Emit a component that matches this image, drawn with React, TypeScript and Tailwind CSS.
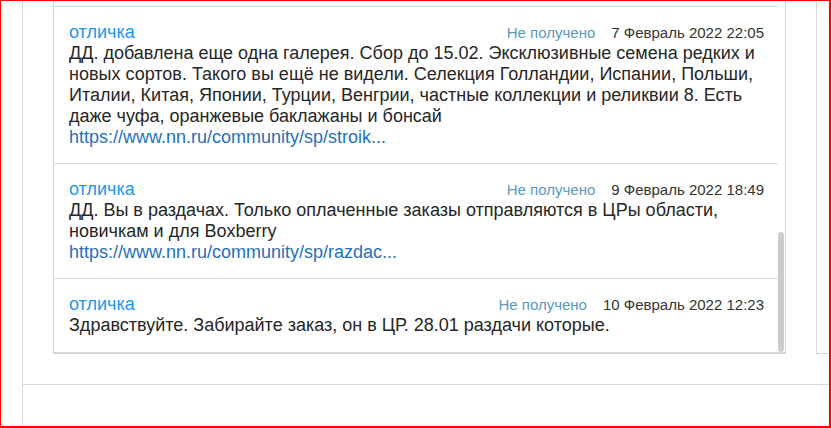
import React from "react";

type Msg = {
  name: string;
  date: string;
  text: string[];
  link?: string;
};

const messages: Msg[] = [
  {
    name: "отличка",
    date: "7 Февраль 2022 22:05",
    text: [
      "ДД. добавлена еще одна галерея. Сбор до 15.02. Эксклюзивные семена редких и",
      "новых сортов. Такого вы ещё не видели. Селекция Голландии, Испании, Польши,",
      "Италии, Китая, Японии, Турции, Венгрии, частные коллекции и реликвии 8. Есть",
      "даже чуфа, оранжевые баклажаны и бонсай",
    ],
    link: "https://www.nn.ru/community/sp/stroik...",
  },
  {
    name: "отличка",
    date: "9 Февраль 2022 18:49",
    text: [
      "ДД. Вы в раздачах. Только оплаченные заказы отправляются в ЦРы области,",
      "новичкам и для Boxberry",
    ],
    link: "https://www.nn.ru/community/sp/razdac...",
  },
  {
    name: "отличка",
    date: "10 Февраль 2022 12:23",
    text: ["Здравствуйте. Забирайте заказ, он в ЦР. 28.01 раздачи которые."],
  },
];

function Message({ m }: { m: Msg }) {
  return (
    <div className="border-t border-[#dadada] pt-[15px] pb-[15px] pl-[15px] pr-[14px]">
      <div className="flex items-baseline justify-between h-[21px]">
        <span className="text-[18px] leading-[21px] text-[#2196f3]">{m.name}</span>
        <div className="flex items-baseline">
          <span className="text-[15px] leading-[21px] text-[#5a98c2]">Не получено</span>
          <span className="ml-4 text-[15px] leading-[21px] text-[#333333]">{m.date}</span>
        </div>
      </div>
      <div className="text-[18px] leading-[21px] text-[#262626]">
        {m.text.map((t, i) => (
          <div key={i} className="whitespace-nowrap">
            {t}
          </div>
        ))}
        {m.link && (
          <div className="text-[#1f6fc0] whitespace-nowrap">{m.link}</div>
        )}
      </div>
    </div>
  );
}

export default function App() {
  return (
    <div className="w-[831px] h-[428px] bg-white border-[#ff0000] border-t border-l border-r-2 border-b-2 flex overflow-hidden font-['Liberation_Sans',Arial,sans-serif]">
      <div className="w-[21px] shrink-0" />
      <div className="flex-1 border-l border-[#d9d9d9] flex flex-col">
        <div className="h-[383px] shrink-0 flex items-start">
          <div className="ml-[30px] w-[733px] h-[353px] shrink-0 border-l border-r border-b-2 border-[#d6d6d6] flex">
            <div className="flex-1 h-full overflow-hidden pt-[5px]">
              {messages.map((m, i) => (
                <Message key={i} m={m} />
              ))}
            </div>
            <div className="w-[7px] shrink-0">
              <div className="mt-[231px] w-[6px] h-[120px] rounded-[3px] bg-[#c8cdd2]" />
            </div>
          </div>
          <div className="ml-[30px] flex-1 h-[353px] border-l border-b border-[#d9d9d9]" />
        </div>
        <div className="flex-1 border-t border-[#d9d9d9]" />
      </div>
    </div>
  );
}
